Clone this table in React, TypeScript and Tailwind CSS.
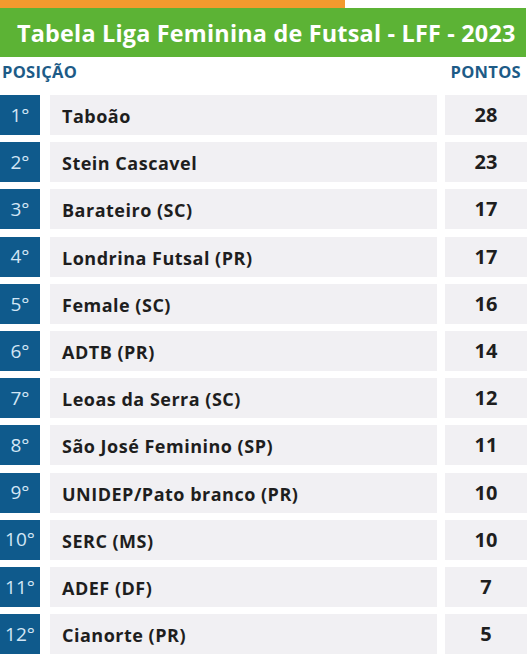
const rows: [string, number][] = [
  ["Taboão", 28],
  ["Stein Cascavel", 23],
  ["Barateiro (SC)", 17],
  ["Londrina Futsal (PR)", 17],
  ["Female (SC)", 16],
  ["ADTB (PR)", 14],
  ["Leoas da Serra (SC)", 12],
  ["São José Feminino (SP)", 11],
  ["UNIDEP/Pato branco (PR)", 10],
  ["SERC (MS)", 10],
  ["ADEF (DF)", 7],
  ["Cianorte (PR)", 5],
];

export default function App() {
  return (
    <div
      className="w-[532px] h-[654px] bg-white overflow-hidden"
      style={{ fontFamily: '"Open Sans", "Liberation Sans", sans-serif' }}
    >
      <div className="h-[8px] w-[345px] bg-[#f29a2e]" />
      <div className="h-[49px] w-[526px] bg-[#5cb335] flex items-center pl-[17px] pt-[3px]">
        <h1 className="text-white text-[23.4px] font-bold tracking-[0.2px] leading-none">
          Tabela Liga Feminina de Futsal - LFF - 2023
        </h1>
      </div>
      <div className="flex justify-between items-center h-[38px] pl-[2px] pr-[11px] pb-[8px] text-[#1d5b87] font-bold text-[16.5px] tracking-[0.3px]">
        <span>POSIÇÃO</span>
        <span>PONTOS</span>
      </div>
      <div className="flex flex-col gap-[7.2px]">
        {rows.map(([name, pts], i) => (
          <div key={name} className="flex h-[40px]">
            <div className="w-[40px] bg-[#0f5a8c] text-[#d3e6f5] text-[19px] flex items-center justify-center">
              {i + 1}°
            </div>
            <div className="ml-[10px] w-[387px] bg-[#f1f0f3] flex items-center pl-[12px] pt-[3px] text-[18px] tracking-[0.5px] font-bold text-[#1e1e1e]">
              {name}
            </div>
            <div className="ml-[8px] w-[82px] bg-[#f1f0f3] flex items-center justify-center text-[20px] font-bold text-[#1e1e1e]">
              {pts}
            </div>
          </div>
        ))}
      </div>
    </div>
  );
}
